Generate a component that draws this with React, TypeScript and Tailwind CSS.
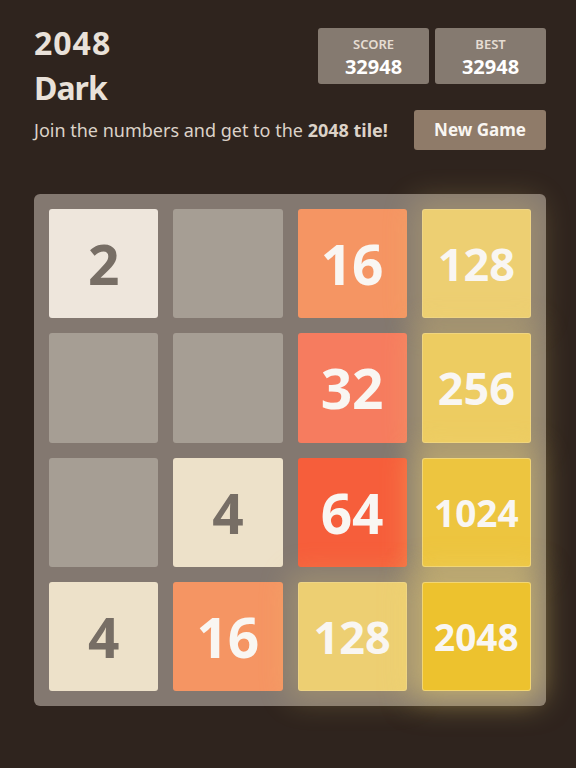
import React from "react";

type T = { v: number | null };

const tiles: (number | null)[] = [
  2, null, 16, 128,
  null, null, 32, 256,
  null, 4, 64, 1024,
  4, 16, 128, 2048,
];

function tileClass(v: number | null): string {
  switch (v) {
    case null:
      return "bg-[#a69e94]";
    case 2:
      return "bg-[#eee6dc] text-[#776e65] text-[55px]";
    case 4:
      return "bg-[#ede1c9] text-[#776e65] text-[55px]";
    case 16:
      return "bg-[#f59563] text-[#f9f6f2] text-[55px]";
    case 32:
      return "bg-[#f67c5f] text-[#f9f6f2] text-[55px]";
    case 64:
      return "bg-[#f65e3b] text-[#f9f6f2] text-[55px]";
    case 128:
      return "bg-[#edcf72] text-[#f9f6f2] text-[45px] shadow-[0_0_30px_10px_rgba(243,215,116,0.24),inset_0_0_0_1px_rgba(255,255,255,0.14)]";
    case 256:
      return "bg-[#edcc61] text-[#f9f6f2] text-[45px] shadow-[0_0_30px_10px_rgba(243,215,116,0.32),inset_0_0_0_1px_rgba(255,255,255,0.19)]";
    case 1024:
      return "bg-[#edc53f] text-[#f9f6f2] text-[37px] shadow-[0_0_30px_10px_rgba(243,215,116,0.48),inset_0_0_0_1px_rgba(255,255,255,0.29)]";
    case 2048:
      return "bg-[#edc22e] text-[#f9f6f2] text-[37px] shadow-[0_0_30px_10px_rgba(243,215,116,0.56),inset_0_0_0_1px_rgba(255,255,255,0.33)]";
    default:
      return "";
  }
}

function Tile({ v }: T) {
  return (
    <div
      className={
        "rounded-[3px] flex items-center justify-center font-bold leading-none " +
        tileClass(v)
      }
    >
      {v ?? ""}
    </div>
  );
}

function ScoreBox({ label, value }: { label: string; value: string }) {
  return (
    <div className="w-[111px] h-[56px] rounded-[3px] bg-[#857a70] flex flex-col items-center pt-[8px]">
      <div className="text-[13px] leading-[16px] text-[#e6ddd3] font-semibold">{label}</div>
      <div className="text-[20px] leading-[24px] mt-[3px] text-white font-bold">{value}</div>
    </div>
  );
}

export default function App() {
  return (
    <div className="min-h-screen bg-[#2f241e] font-['Noto_Sans',sans-serif] pt-[20px] px-[34px]">
      <div className="w-[512px]">
        <div className="flex justify-between items-start">
          <div className="text-[32px] leading-[45px] font-bold text-[#e9e1d9]">
            <div className="tracking-[1px]">2048</div>
            <div className="tracking-[-1px]">Dark</div>
          </div>
          <div className="flex gap-[6px] mt-[8px]">
            <ScoreBox label="SCORE" value="32948" />
            <ScoreBox label="BEST" value="32948" />
          </div>
        </div>
        <div className="flex justify-between items-center">
          <div className="text-[18px] text-[#dcd2c8]">
            Join the numbers and get to the <span className="font-bold">2048 tile!</span>
          </div>
          <button className="w-[132px] h-[40px] rounded-[3px] bg-[#8f7b69] text-[#f9f6f2] text-[17px] font-bold">
            New Game
          </button>
        </div>
        <div className="mt-[44px] w-[512px] h-[512px] rounded-[6px] bg-[#837870] p-[15px] grid grid-cols-4 grid-rows-4 gap-[15px]">
          {tiles.map((v, i) => (
            <Tile key={i} v={v} />
          ))}
        </div>
      </div>
    </div>
  );
}
